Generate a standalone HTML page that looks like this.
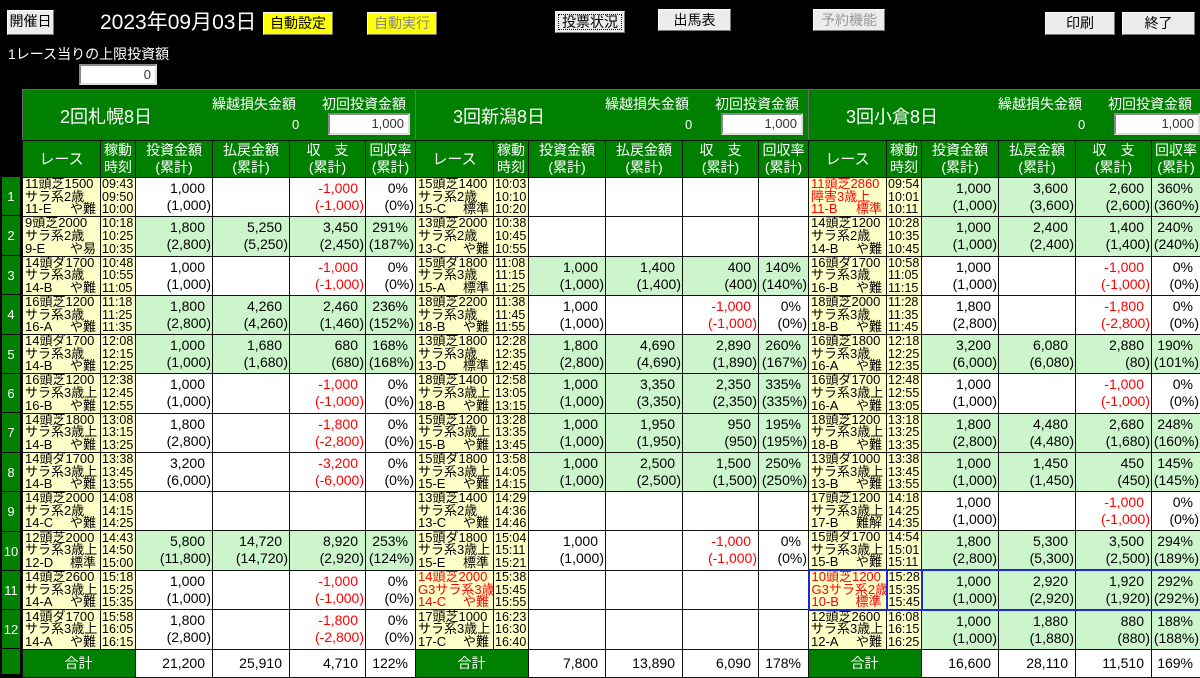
<!DOCTYPE html>
<html><head><meta charset="utf-8"><style>
*{box-sizing:border-box;margin:0;padding:0}
body{width:1200px;height:675px;background:#000;overflow:hidden;position:relative;font-family:"Liberation Sans","Noto Sans CJK JP",sans-serif;color:#fff}
.a{position:absolute;white-space:nowrap}
.btn{position:absolute;background:#ececec;border:1px solid #fff;border-right-color:#777;border-bottom-color:#777;color:#000;font-size:14px;text-align:center;line-height:21px}
.y{background:#ffff00}
.band{position:absolute;top:89px;height:52px;background:#008000;border-left:1px solid #6a6a6a;border-top:1px solid #6a6a6a}
.inp{position:absolute;background:#fff;border:2px solid #888;border-right-color:#ddd;border-bottom-color:#ddd;color:#333;font-size:13px;text-align:right;padding-right:4px;line-height:17px}
table{position:absolute;left:22px;top:140px;width:1178px;border-collapse:collapse;table-layout:fixed}
td{border:1px solid #111;background:#fff;color:#000;font-size:14px;line-height:17px;text-align:right;padding:0 1px 0 0;vertical-align:middle;overflow:hidden;white-space:nowrap}
td.g{background:#ccf5cc}
tr.h td{background:#008000;color:#fff;text-align:center;font-size:14px;line-height:17px;height:37px;padding:0}
tr.d td{height:39.25px}
td.r,td.t{background:#ffffc8;text-align:left;font-size:13px;line-height:12.6px;padding:0 0 0 2px;vertical-align:middle}
td.t{font-size:12.5px;padding-left:1px;border-left:1px solid #111}
td.red{color:#f00}
.l3{display:flex;justify-content:space-between;padding-right:4px}
.m{color:#f00}
i{display:inline-block;width:6px}
tr.tot td{height:27px;line-height:27px}
td.sum{background:#008000;color:#fff;text-align:center;font-size:14px}
.num{position:absolute;left:2px;width:18px;background:#008000;color:#fff;font-size:13px;text-align:center;border-bottom:1px solid #000}
td.bb{border-top:2px solid #1a2ad0;border-bottom:2px solid #1a2ad0}
td.bl{border:2px solid #1a2ad0}
</style></head><body>
<div class="btn" style="left:7px;top:10px;width:47px;height:25px">開催日程</div>
<div class="a" style="left:100px;top:9px;font-size:21px;line-height:28px">2023年09月03日</div>
<div class="btn y" style="left:263px;top:12px;width:70px;height:23px">自動設定</div>
<div class="btn y" style="left:367px;top:12px;width:70px;height:23px;color:#888">自動実行</div>
<div class="btn" style="left:555px;top:11px;width:70px;height:22px;outline:1px dotted #000;outline-offset:-4px">投票状況</div>
<div class="btn" style="left:658px;top:9px;width:73px;height:22px">出馬表</div>
<div class="btn" style="left:813px;top:9px;width:72px;height:22px;color:#999">予約機能</div>
<div class="btn" style="left:1045px;top:12px;width:70px;height:23px">印刷</div>
<div class="btn" style="left:1122px;top:12px;width:73px;height:23px">終了</div>
<div class="a" style="left:8px;top:44px;font-size:14px">1レース当りの上限投資額</div>
<div class="inp" style="left:79px;top:64px;width:78px;height:21px">0</div>

<div class="band" style="left:22px;width:393px"></div>
<div class="band" style="left:415px;width:393px"></div>
<div class="band" style="left:808px;width:392px"></div>
<div class="a" style="left:60px;top:103px;font-size:18px">2回札幌8日</div>
<div class="a" style="left:212px;top:94px;font-size:14px">繰越損失金額</div>
<div class="a" style="left:292px;top:117px;font-size:13px">0</div>
<div class="a" style="left:322px;top:94px;font-size:14px">初回投資金額</div>
<div class="inp" style="left:328px;top:113px;width:82px;height:22px">1,000</div>
<div class="a" style="left:453px;top:103px;font-size:18px">3回新潟8日</div>
<div class="a" style="left:605px;top:94px;font-size:14px">繰越損失金額</div>
<div class="a" style="left:685px;top:117px;font-size:13px">0</div>
<div class="a" style="left:715px;top:94px;font-size:14px">初回投資金額</div>
<div class="inp" style="left:721px;top:113px;width:82px;height:22px">1,000</div>
<div class="a" style="left:846px;top:103px;font-size:18px">3回小倉8日</div>
<div class="a" style="left:998px;top:94px;font-size:14px">繰越損失金額</div>
<div class="a" style="left:1078px;top:117px;font-size:13px">0</div>
<div class="a" style="left:1108px;top:94px;font-size:14px">初回投資金額</div>
<div class="inp" style="left:1114px;top:113px;width:86px;height:22px">1,000</div>

<div class="num" style="top:177px;height:39px;line-height:39px">1</div>
<div class="num" style="top:216px;height:40px;line-height:40px">2</div>
<div class="num" style="top:256px;height:39px;line-height:39px">3</div>
<div class="num" style="top:295px;height:40px;line-height:40px">4</div>
<div class="num" style="top:335px;height:39px;line-height:39px">5</div>
<div class="num" style="top:374px;height:39px;line-height:39px">6</div>
<div class="num" style="top:413px;height:40px;line-height:40px">7</div>
<div class="num" style="top:453px;height:39px;line-height:39px">8</div>
<div class="num" style="top:492px;height:40px;line-height:40px">9</div>
<div class="num" style="top:532px;height:39px;line-height:39px">10</div>
<div class="num" style="top:571px;height:39px;line-height:39px">11</div>
<div class="num" style="top:610px;height:39px;line-height:39px">12</div>
<div class="num" style="top:649px;height:26px"></div>

<table>
<colgroup><col style="width:78px"><col style="width:35px"><col style="width:77px"><col style="width:77px"><col style="width:76px"><col style="width:50px"><col style="width:78px"><col style="width:35px"><col style="width:77px"><col style="width:77px"><col style="width:76px"><col style="width:50px"><col style="width:78px"><col style="width:35px"><col style="width:77px"><col style="width:77px"><col style="width:76px"><col style="width:49px"></colgroup>
<tr class="h"><td style="font-size:15px">レース</td><td>稼動<br>時刻</td><td>投資金額<br>(累計)</td><td>払戻金額<br>(累計)</td><td>収　支<br>(累計)</td><td>回収率<br>(累計)</td><td style="font-size:15px">レース</td><td>稼動<br>時刻</td><td>投資金額<br>(累計)</td><td>払戻金額<br>(累計)</td><td>収　支<br>(累計)</td><td>回収率<br>(累計)</td><td style="font-size:15px">レース</td><td>稼動<br>時刻</td><td>投資金額<br>(累計)</td><td>払戻金額<br>(累計)</td><td>収　支<br>(累計)</td><td>回収率<br>(累計)</td></tr>

<tr class="d"><td class="r">11頭芝1500<br>サラ系2歳<div class="l3"><span>11-E</span><span>や難</span></div></td><td class="t">09:43<br>09:50<br>10:00</td><td>1,000<i></i><br>(1,000)</td><td></td><td class="m">-1,000<i></i><br>(-1,000)</td><td>0%<i></i><br>(0%)</td>
<td class="r">15頭芝1400<br>サラ系2歳<div class="l3"><span>15-C</span><span>標準</span></div></td><td class="t">10:03<br>10:10<br>10:20</td><td></td><td></td><td></td><td></td>
<td class="r red">11頭芝2860<br>障害3歳上<div class="l3"><span>11-B</span><span>標準</span></div></td><td class="t">09:54<br>10:01<br>10:11</td><td class="g">1,000<i></i><br>(1,000)</td><td class="g">3,600<i></i><br>(3,600)</td><td class="g">2,600<i></i><br>(2,600)</td><td class="g">360%<i></i><br>(360%)</td></tr>

<tr class="d"><td class="r">9頭芝2000<br>サラ系2歳<div class="l3"><span>9-E</span><span>や易</span></div></td><td class="t">10:18<br>10:25<br>10:35</td><td class="g">1,800<i></i><br>(2,800)</td><td class="g">5,250<i></i><br>(5,250)</td><td class="g">3,450<i></i><br>(2,450)</td><td class="g">291%<i></i><br>(187%)</td>
<td class="r">13頭芝2000<br>サラ系2歳<div class="l3"><span>13-C</span><span>や難</span></div></td><td class="t">10:38<br>10:45<br>10:55</td><td></td><td></td><td></td><td></td>
<td class="r">14頭芝1200<br>サラ系2歳<div class="l3"><span>14-B</span><span>や難</span></div></td><td class="t">10:28<br>10:35<br>10:45</td><td class="g">1,000<i></i><br>(1,000)</td><td class="g">2,400<i></i><br>(2,400)</td><td class="g">1,400<i></i><br>(1,400)</td><td class="g">240%<i></i><br>(240%)</td></tr>

<tr class="d"><td class="r">14頭ダ1700<br>サラ系3歳<div class="l3"><span>14-B</span><span>や難</span></div></td><td class="t">10:48<br>10:55<br>11:05</td><td>1,000<i></i><br>(1,000)</td><td></td><td class="m">-1,000<i></i><br>(-1,000)</td><td>0%<i></i><br>(0%)</td>
<td class="r">15頭ダ1800<br>サラ系3歳<div class="l3"><span>15-A</span><span>標準</span></div></td><td class="t">11:08<br>11:15<br>11:25</td><td class="g">1,000<i></i><br>(1,000)</td><td class="g">1,400<i></i><br>(1,400)</td><td class="g">400<i></i><br>(400)</td><td class="g">140%<i></i><br>(140%)</td>
<td class="r">16頭ダ1700<br>サラ系3歳<div class="l3"><span>16-B</span><span>や難</span></div></td><td class="t">10:58<br>11:05<br>11:15</td><td>1,000<i></i><br>(1,000)</td><td></td><td class="m">-1,000<i></i><br>(-1,000)</td><td>0%<i></i><br>(0%)</td></tr>

<tr class="d"><td class="r">16頭芝1200<br>サラ系3歳<div class="l3"><span>16-A</span><span>や難</span></div></td><td class="t">11:18<br>11:25<br>11:35</td><td class="g">1,800<i></i><br>(2,800)</td><td class="g">4,260<i></i><br>(4,260)</td><td class="g">2,460<i></i><br>(1,460)</td><td class="g">236%<i></i><br>(152%)</td>
<td class="r">18頭芝2200<br>サラ系3歳<div class="l3"><span>18-B</span><span>や難</span></div></td><td class="t">11:38<br>11:45<br>11:55</td><td>1,000<i></i><br>(1,000)</td><td></td><td class="m">-1,000<i></i><br>(-1,000)</td><td>0%<i></i><br>(0%)</td>
<td class="r">18頭芝2000<br>サラ系3歳<div class="l3"><span>18-B</span><span>や難</span></div></td><td class="t">11:28<br>11:35<br>11:45</td><td>1,800<i></i><br>(2,800)</td><td></td><td class="m">-1,800<i></i><br>(-2,800)</td><td>0%<i></i><br>(0%)</td></tr>

<tr class="d"><td class="r">14頭ダ1700<br>サラ系3歳<div class="l3"><span>14-B</span><span>や難</span></div></td><td class="t">12:08<br>12:15<br>12:25</td><td class="g">1,000<i></i><br>(1,000)</td><td class="g">1,680<i></i><br>(1,680)</td><td class="g">680<i></i><br>(680)</td><td class="g">168%<i></i><br>(168%)</td>
<td class="r">13頭芝1800<br>サラ系3歳<div class="l3"><span>13-D</span><span>標準</span></div></td><td class="t">12:28<br>12:35<br>12:45</td><td class="g">1,800<i></i><br>(2,800)</td><td class="g">4,690<i></i><br>(4,690)</td><td class="g">2,890<i></i><br>(1,890)</td><td class="g">260%<i></i><br>(167%)</td>
<td class="r">16頭芝1800<br>サラ系3歳<div class="l3"><span>16-A</span><span>や難</span></div></td><td class="t">12:18<br>12:25<br>12:35</td><td class="g">3,200<i></i><br>(6,000)</td><td class="g">6,080<i></i><br>(6,080)</td><td class="g">2,880<i></i><br>(80)</td><td class="g">190%<i></i><br>(101%)</td></tr>

<tr class="d"><td class="r">16頭芝1200<br>サラ系3歳上<div class="l3"><span>16-B</span><span>や難</span></div></td><td class="t">12:38<br>12:45<br>12:55</td><td>1,000<i></i><br>(1,000)</td><td></td><td class="m">-1,000<i></i><br>(-1,000)</td><td>0%<i></i><br>(0%)</td>
<td class="r">18頭芝1400<br>サラ系3歳上<div class="l3"><span>18-B</span><span>や難</span></div></td><td class="t">12:58<br>13:05<br>13:15</td><td class="g">1,000<i></i><br>(1,000)</td><td class="g">3,350<i></i><br>(3,350)</td><td class="g">2,350<i></i><br>(2,350)</td><td class="g">335%<i></i><br>(335%)</td>
<td class="r">16頭ダ1700<br>サラ系3歳上<div class="l3"><span>16-A</span><span>や難</span></div></td><td class="t">12:48<br>12:55<br>13:05</td><td>1,000<i></i><br>(1,000)</td><td></td><td class="m">-1,000<i></i><br>(-1,000)</td><td>0%<i></i><br>(0%)</td></tr>

<tr class="d"><td class="r">14頭芝1800<br>サラ系3歳上<div class="l3"><span>14-B</span><span>や難</span></div></td><td class="t">13:08<br>13:15<br>13:25</td><td>1,800<i></i><br>(2,800)</td><td></td><td class="m">-1,800<i></i><br>(-2,800)</td><td>0%<i></i><br>(0%)</td>
<td class="r">15頭芝1200<br>サラ系3歳上<div class="l3"><span>15-B</span><span>や難</span></div></td><td class="t">13:28<br>13:35<br>13:45</td><td class="g">1,000<i></i><br>(1,000)</td><td class="g">1,950<i></i><br>(1,950)</td><td class="g">950<i></i><br>(950)</td><td class="g">195%<i></i><br>(195%)</td>
<td class="r">18頭芝1200<br>サラ系3歳上<div class="l3"><span>18-B</span><span>や難</span></div></td><td class="t">13:18<br>13:25<br>13:35</td><td class="g">1,800<i></i><br>(2,800)</td><td class="g">4,480<i></i><br>(4,480)</td><td class="g">2,680<i></i><br>(1,680)</td><td class="g">248%<i></i><br>(160%)</td></tr>

<tr class="d"><td class="r">14頭ダ1700<br>サラ系3歳上<div class="l3"><span>14-B</span><span>や難</span></div></td><td class="t">13:38<br>13:45<br>13:55</td><td>3,200<i></i><br>(6,000)</td><td></td><td class="m">-3,200<i></i><br>(-6,000)</td><td>0%<i></i><br>(0%)</td>
<td class="r">15頭ダ1800<br>サラ系3歳上<div class="l3"><span>15-E</span><span>や難</span></div></td><td class="t">13:58<br>14:05<br>14:15</td><td class="g">1,000<i></i><br>(1,000)</td><td class="g">2,500<i></i><br>(2,500)</td><td class="g">1,500<i></i><br>(1,500)</td><td class="g">250%<i></i><br>(250%)</td>
<td class="r">13頭ダ1000<br>サラ系3歳上<div class="l3"><span>13-B</span><span>や難</span></div></td><td class="t">13:38<br>13:45<br>13:55</td><td class="g">1,000<i></i><br>(1,000)</td><td class="g">1,450<i></i><br>(1,450)</td><td class="g">450<i></i><br>(450)</td><td class="g">145%<i></i><br>(145%)</td></tr>

<tr class="d"><td class="r">14頭芝2000<br>サラ系2歳<div class="l3"><span>14-C</span><span>や難</span></div></td><td class="t">14:08<br>14:15<br>14:25</td><td></td><td></td><td></td><td></td>
<td class="r">13頭芝1400<br>サラ系2歳<div class="l3"><span>13-C</span><span>や難</span></div></td><td class="t">14:29<br>14:36<br>14:46</td><td></td><td></td><td></td><td></td>
<td class="r">17頭芝1200<br>サラ系3歳上<div class="l3"><span>17-B</span><span>難解</span></div></td><td class="t">14:18<br>14:25<br>14:35</td><td>1,000<i></i><br>(1,000)</td><td></td><td class="m">-1,000<i></i><br>(-1,000)</td><td>0%<i></i><br>(0%)</td></tr>

<tr class="d"><td class="r">12頭芝2000<br>サラ系3歳上<div class="l3"><span>12-D</span><span>標準</span></div></td><td class="t">14:43<br>14:50<br>15:00</td><td class="g">5,800<i></i><br>(11,800)</td><td class="g">14,720<i></i><br>(14,720)</td><td class="g">8,920<i></i><br>(2,920)</td><td class="g">253%<i></i><br>(124%)</td>
<td class="r">15頭ダ1800<br>サラ系3歳上<div class="l3"><span>15-E</span><span>標準</span></div></td><td class="t">15:04<br>15:11<br>15:21</td><td>1,000<i></i><br>(1,000)</td><td></td><td class="m">-1,000<i></i><br>(-1,000)</td><td>0%<i></i><br>(0%)</td>
<td class="r">15頭ダ1700<br>サラ系3歳上<div class="l3"><span>15-B</span><span>や難</span></div></td><td class="t">14:54<br>15:01<br>15:11</td><td class="g">1,800<i></i><br>(2,800)</td><td class="g">5,300<i></i><br>(5,300)</td><td class="g">3,500<i></i><br>(2,500)</td><td class="g">294%<i></i><br>(189%)</td></tr>

<tr class="d"><td class="r">14頭芝2600<br>サラ系3歳上<div class="l3"><span>14-A</span><span>や難</span></div></td><td class="t">15:18<br>15:25<br>15:35</td><td>1,000<i></i><br>(1,000)</td><td></td><td class="m">-1,000<i></i><br>(-1,000)</td><td>0%<i></i><br>(0%)</td>
<td class="r red">14頭芝2000<br>G3サラ系3歳<div class="l3"><span>14-C</span><span>や難</span></div></td><td class="t">15:38<br>15:45<br>15:55</td><td></td><td></td><td></td><td></td>
<td class="r red bl">10頭芝1200<br>G3サラ系2歳<div class="l3"><span>10-B</span><span>標準</span></div></td><td class="t bl">15:28<br>15:35<br>15:45</td><td class="g bb">1,000<i></i><br>(1,000)</td><td class="g bb">2,920<i></i><br>(2,920)</td><td class="g bb">1,920<i></i><br>(1,920)</td><td class="g bb">292%<i></i><br>(292%)</td></tr>

<tr class="d"><td class="r">14頭ダ1700<br>サラ系3歳上<div class="l3"><span>14-A</span><span>や難</span></div></td><td class="t">15:58<br>16:05<br>16:15</td><td>1,800<i></i><br>(2,800)</td><td></td><td class="m">-1,800<i></i><br>(-2,800)</td><td>0%<i></i><br>(0%)</td>
<td class="r">17頭芝1000<br>サラ系3歳上<div class="l3"><span>17-C</span><span>や難</span></div></td><td class="t">16:23<br>16:30<br>16:40</td><td></td><td></td><td></td><td></td>
<td class="r">12頭芝2600<br>サラ系3歳上<div class="l3"><span>12-A</span><span>や難</span></div></td><td class="t">16:08<br>16:15<br>16:25</td><td class="g">1,000<i></i><br>(1,000)</td><td class="g">1,880<i></i><br>(1,880)</td><td class="g">880<i></i><br>(880)</td><td class="g">188%<i></i><br>(188%)</td></tr>

<tr class="tot"><td class="sum" colspan="2">合計</td><td>21,200<i></i></td><td>25,910<i></i></td><td>4,710<i></i></td><td>122%<i></i></td>
<td class="sum" colspan="2">合計</td><td>7,800<i></i></td><td>13,890<i></i></td><td>6,090<i></i></td><td>178%<i></i></td>
<td class="sum" colspan="2">合計</td><td>16,600<i></i></td><td>28,110<i></i></td><td>11,510<i></i></td><td>169%<i></i></td></tr>
</table>
</body></html>
